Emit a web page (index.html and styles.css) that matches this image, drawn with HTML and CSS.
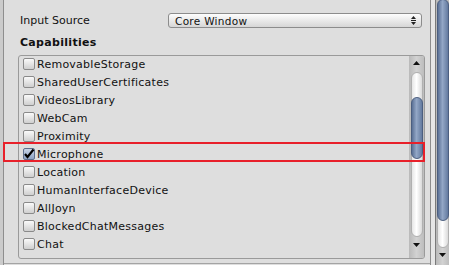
FILE: index.html
```html
<!DOCTYPE html>
<html lang="en">
<head>
    <meta charset="UTF-8">
    <title>Player Settings - Capabilities</title>
    <link rel="stylesheet" href="styles.css">
</head>
<body>
    <div class="window">
        <div class="edge-left"></div>

        <div class="inspector">
            <div class="field-row">
                <div class="field-label">Input Source</div>
                <div class="dropdown">
                    <span>Core Window</span>
                    <svg class="dropdown-arrows" width="5" height="9" viewBox="0 0 5 9">
                        <path d="M2.5 0 L5 3 L0 3 Z M0 4 H5 V5 H0 Z M0 6 L5 6 L2.5 9 Z" fill="#222"/>
                    </svg>
                </div>
            </div>

            <div class="section-title">Capabilities</div>

            <div class="listbox">
                <div class="list-rows">
                    <div class="row"><span class="check"></span>RemovableStorage</div>
                    <div class="row"><span class="check"></span>SharedUserCertificates</div>
                    <div class="row"><span class="check"></span>VideosLibrary</div>
                    <div class="row"><span class="check"></span>WebCam</div>
                    <div class="row"><span class="check"></span>Proximity</div>
                    <div class="row"><span class="check checked">
                        <svg width="12" height="12" viewBox="0 0 12 12">
                            <path d="M2 6 L4.5 9 L10.5 1.5" fill="none" stroke="#000" stroke-width="2.2"/>
                        </svg>
                    </span>Microphone</div>
                    <div class="row"><span class="check"></span>Location</div>
                    <div class="row"><span class="check"></span>HumanInterfaceDevice</div>
                    <div class="row"><span class="check"></span>AllJoyn</div>
                    <div class="row"><span class="check"></span>BlockedChatMessages</div>
                    <div class="row"><span class="check"></span>Chat</div>
                </div>

                <div class="scrollbar small">
                    <div class="scroll-btn up">
                        <svg width="7" height="4" viewBox="0 0 7 4"><path d="M3.5 0 L7 4 L0 4 Z" fill="#111"/></svg>
                    </div>
                    <div class="scroll-well">
                        <div class="scroll-thumb"></div>
                    </div>
                    <div class="scroll-btn down">
                        <svg width="7" height="4" viewBox="0 0 7 4"><path d="M0 0 L7 0 L3.5 4 Z" fill="#111"/></svg>
                    </div>
                </div>
            </div>

            <div class="next-section"></div>
        </div>

        <div class="splitter"></div>

        <div class="scrollbar main">
            <div class="scroll-well">
                <div class="scroll-thumb"></div>
            </div>
            <div class="scroll-btn down">
                <svg width="7" height="4" viewBox="0 0 7 4"><path d="M0 0 L7 0 L3.5 4 Z" fill="#111"/></svg>
            </div>
        </div>

        <!-- annotation box drawn over the Microphone row -->
        <div class="highlight"></div>
    </div>
</body>
</html>
```

FILE: styles.css
```css
body {
    margin: 0;
    font-family: "DejaVu Sans", Verdana, sans-serif;
    font-size: 11px;
    color: #111;
    background: #dedede;
}

.window {
    position: relative;
    display: flex;
    width: 449px;
    height: 265px;
    overflow: hidden;
    background: #dedede;
}

.edge-left {
    width: 3px;
    flex-shrink: 0;
    background: #cbcbcb;
    border-right: 1px solid #8e8e8e;
}

.inspector {
    flex: 1;
    display: flex;
    flex-direction: column;
    padding: 13px 5px 0 14px;
}

.field-row {
    display: flex;
    align-items: center;
    height: 15px;
}

.field-label {
    width: 150px;
    padding-left: 2px;
    box-sizing: border-box;
}

.dropdown {
    flex: 1;
    margin-right: 3px;
    height: 15px;
    box-sizing: border-box;
    display: flex;
    align-items: center;
    justify-content: space-between;
    padding: 0 5px 0 6px;
    border: 1px solid #8c8c8c;
    border-radius: 3px;
    background: linear-gradient(#fdfdfd, #d6d6d6);
    font-size: 10.5px;
    letter-spacing: 0.3px;
}

.dropdown-arrows {
    display: block;
}

.section-title {
    margin-top: 8px;
    padding-left: 2px;
    height: 14px;
    line-height: 14px;
    font-weight: bold;
    letter-spacing: 0.3px;
}

.listbox {
    margin-top: 5px;
    height: 204px;
    box-sizing: border-box;
    display: flex;
    border: 1px solid #9a9a9a;
    border-radius: 3px;
    overflow: hidden;
}

.list-rows {
    flex: 1;
    margin-top: -1px;
    padding-left: 4px;
    overflow: hidden;
}

.row {
    display: flex;
    align-items: center;
    gap: 2px;
    height: 18px;
    letter-spacing: 0.25px;
    white-space: nowrap;
}

.check {
    width: 12px;
    height: 12px;
    box-sizing: border-box;
    flex-shrink: 0;
    border: 1px solid #8a8a8a;
    border-radius: 2px;
    background: linear-gradient(#fafafa, #cfcfcf);
}

.check.checked {
    background: linear-gradient(#c8d4e6, #8ea3c4);
    border-color: #5e6f8c;
}

.check svg {
    display: block;
    margin: -1px 0 0 -1px;
}

.scrollbar {
    flex-shrink: 0;
    display: flex;
    flex-direction: column;
    align-items: center;
    background: linear-gradient(to right, #b9b9b9, #d2d2d2 50%, #bdbdbd);
}

.scrollbar.small {
    width: 15px;
}

.scrollbar.main {
    width: 13px;
}

.scroll-btn {
    display: flex;
    justify-content: center;
}

.scrollbar.small .scroll-btn.up {
    height: 14px;
    align-items: center;
}

.scrollbar.small .scroll-btn.down {
    flex: 1;
    padding-top: 6px;
}

.scroll-well {
    width: 12px;
    box-sizing: border-box;
    border: 1px solid #b0b0b0;
    border-radius: 6px;
    background: linear-gradient(to right, #e6e6e6, #ffffff 45%, #dadada);
}

.scrollbar.small .scroll-well {
    margin-top: 2px;
    height: 165px;
}

.scroll-thumb {
    box-sizing: border-box;
    border: 1px solid #4c5f80;
    border-radius: 6px;
    background: linear-gradient(to right, #5b7196, #93a7c6 45%, #647ba0);
}

.scrollbar.small .scroll-thumb {
    margin: 24px -1px 0;
    height: 62px;
}

.scrollbar.main .scroll-well {
    height: 250px;
    margin-top: -2px;
}

.scrollbar.main .scroll-thumb {
    margin: 0 -1px;
    height: 222px;
}

.scrollbar.main .scroll-btn.down {
    padding-top: 5px;
}

.next-section {
    margin: 4px -5px 0 -14px;
    border-top: 1px solid #a4a4a4;
    flex: 1;
}

.splitter {
    width: 4px;
    flex-shrink: 0;
    background: #e6e6e6;
    border-left: 1px solid #8c8c8c;
    border-right: 1px solid #7a7a7a;
}

.highlight {
    position: absolute;
    left: 3px;
    top: 142px;
    width: 422px;
    height: 20px;
    box-sizing: border-box;
    border: 2px solid #e8202a;
}
```
